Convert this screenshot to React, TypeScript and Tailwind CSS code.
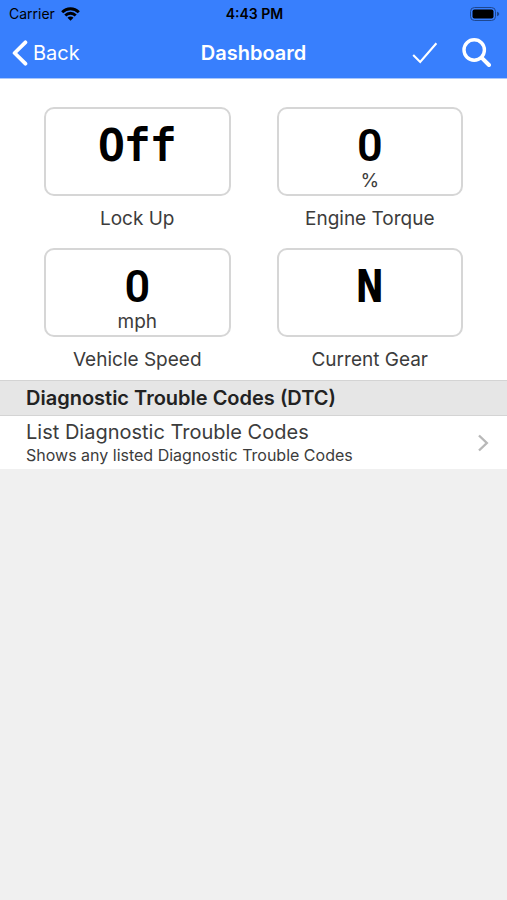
import React from 'react';

const gauges = [
  { label: 'Lock Up', value: 'Off', unit: '', mono: true },
  { label: 'Engine Torque', value: '0', unit: '%', mono: false },
  { label: 'Vehicle Speed', value: '0', unit: 'mph', mono: false },
  { label: 'Current Gear', value: 'N', unit: '', mono: true },
];

function StatusBar() {
  return (
    <div className="grid h-[27px] grid-cols-3 items-center pl-[9px] pr-[7px] text-black">
      <div className="flex items-center gap-[6px] text-[14px]">
        <span>Carrier</span>
        <svg width="19" height="14" viewBox="0 0 19 14" fill="none" stroke="currentColor" strokeWidth="2.9">
          <path d="M1.2 5.2a11.7 11.7 0 0 1 16.6 0" />
          <path d="M4.3 8.4a7.3 7.3 0 0 1 10.4 0" />
          <path d="M9.5 13.8 6.5 10.8a4.2 4.2 0 0 1 6 0z" fill="currentColor" stroke="none" />
        </svg>
      </div>
      <span className="text-center text-[14px] font-semibold">4:43 PM</span>
      <svg className="justify-self-end" width="30" height="14" viewBox="0 0 30 14">
        <rect x="0.5" y="0.5" width="25" height="13" rx="4" fill="none" stroke="#1e478f" />
        <rect x="2.5" y="2.5" width="21" height="9" rx="2" fill="#000" />
        <path d="M27 4.8c1.5.4 2.2 1.2 2.2 2.2s-.7 1.8-2.2 2.2z" fill="#1e478f" />
      </svg>
    </div>
  );
}

export default function App() {
  return (
    <div className="min-h-screen bg-[#f0f0f0] font-['Inter',sans-serif] text-[#3c3c3c]">
      <header className="border-b border-[#a9c7fc] bg-[#387ffd]">
        <StatusBar />
        <nav className="grid h-[51px] grid-cols-3 items-center px-3 text-white">
          <button type="button" className="flex items-center gap-[5px] text-[20px]">
            <svg width="16" height="26" viewBox="0 0 16 26" fill="none" stroke="currentColor" strokeWidth="3.8" strokeLinecap="round" strokeLinejoin="round">
              <path d="M13.4 2.3 2.6 13l10.8 10.7" />
            </svg>
            Back
          </button>
          <h1 className="text-center text-[20px] font-semibold">Dashboard</h1>
          <div className="flex items-center justify-end gap-6 pr-1">
            <button type="button" aria-label="Confirm">
              <svg width="26" height="22" viewBox="0 0 26 22" fill="none" stroke="currentColor" strokeWidth="2.1">
                <path d="m1.2 13 7 6.9L24.4 1.2" />
              </svg>
            </button>
            <button type="button" aria-label="Search">
              <svg width="29" height="29" viewBox="0 0 29 29" fill="none" stroke="currentColor">
                <circle cx="12.2" cy="12" r="10.2" strokeWidth="3.4" />
                <path d="m19.8 19.8 7.2 7.2" strokeWidth="4" strokeLinecap="round" />
              </svg>
            </button>
          </div>
        </nav>
      </header>

      <main>
        <section className="grid grid-cols-2 gap-x-[46px] gap-y-[17px] bg-white px-11 pt-7 pb-2">
          {gauges.map((g) => (
            <div key={g.label} className="text-center">
              <div className="h-[89px] rounded-[10px] border-2 border-[#d6d6d6] pt-[13px]">
                <div
                  className={
                    g.mono
                      ? "font-['DejaVu_Sans_Mono',monospace] text-[43px] leading-[46px] text-black [-webkit-text-stroke:2px_black]"
                      : "font-['Roboto',sans-serif] text-[45px] font-semibold leading-[48px] text-black"
                  }
                >
                  {g.value}
                </div>
                {g.unit && <div className="text-[19px] leading-[22px]">{g.unit}</div>}
              </div>
              <div className="mt-[11px] text-[19px] leading-[24px]">{g.label}</div>
            </div>
          ))}
        </section>

        <section>
          <h2 className="h-9 border-y border-[#d4d4d4] bg-[#e6e6e6] px-[26px] text-[20px] font-semibold leading-[34px] text-[#222222]">
            Diagnostic Trouble Codes (DTC)
          </h2>
          <a href="#codes" className="flex items-center justify-between bg-white pt-[4px] pr-[18px] pb-[3px] pl-[26px]">
            <span>
              <span className="block text-[20px] leading-[25px]">List Diagnostic Trouble Codes</span>
              <span className="block text-[16px] leading-[21px]">Shows any listed Diagnostic Trouble Codes</span>
            </span>
            <svg width="12" height="18" viewBox="0 0 12 18" fill="none" stroke="#b8b8b8" strokeWidth="2.4">
              <path d="m2 1.5 7.8 7.5L2 16.5" />
            </svg>
          </a>
        </section>
      </main>
    </div>
  );
}
